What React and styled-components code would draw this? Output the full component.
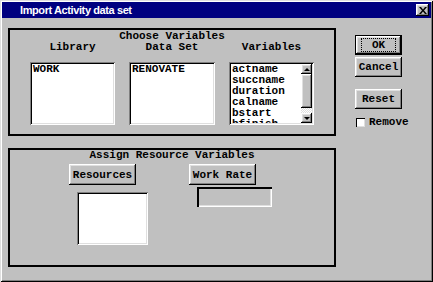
import React from "react"
import styled, { createGlobalStyle, css } from "styled-components"

const GlobalStyle = createGlobalStyle`
  body {
    margin: 0;
    background: #c0c0c0;
  }
`

const mono = `"Liberation Mono", "DejaVu Sans Mono", monospace`

const raised = css`
  box-shadow: inset -1px -1px #000, inset 1px 1px #fff, inset -2px -2px #808080,
    inset 2px 2px #dfdfdf;
`

const sunken = css`
  box-shadow: inset 1px 1px #808080, inset -1px -1px #fff, inset 2px 2px #000,
    inset -2px -2px #dfdfdf;
`

const Window = styled.div`
  width: 433px;
  height: 282px;
  box-sizing: border-box;
  padding: 2px;
  background: #c0c0c0;
  box-shadow: inset 1px 1px #dfdfdf, inset -1px -1px #000, inset 2px 2px #fff,
    inset -2px -2px #808080;
  display: flex;
  flex-direction: column;
  font-family: ${mono};
  font-weight: bold;
  font-size: 11px;
  color: #000;
`

const TitleBar = styled.div`
  height: 16px;
  background: #000080;
  color: #fff;
  display: flex;
  align-items: center;
  justify-content: space-between;
  padding: 0 2px 0 18px;
  font-family: "Liberation Sans", Arial, sans-serif;
  font-weight: bold;
  font-size: 11px;
  letter-spacing: -0.4px;
`

const CloseButton = styled.div`
  width: 13px;
  height: 12px;
  background: #c0c0c0;
  ${raised};
  display: flex;
  align-items: center;
  justify-content: center;
`

const Body = styled.div`
  display: flex;
  gap: 19px;
  padding: 10px 0 0 6px;
`

const LeftCol = styled.div`
  width: 328px;
  display: flex;
  flex-direction: column;
  gap: 12px;
`

const Group = styled.div`
  box-sizing: border-box;
  height: ${(p) => p.$h}px;
  border: 2px solid #000;
  padding-top: ${(p) => p.$pt || 0}px;
`

const GroupTitle = styled.div`
  text-align: center;
  line-height: 10px;
  height: 10px;
`

const VarGrid = styled.div`
  display: grid;
  grid-template-columns: 85px 86px 85px;
  column-gap: 14px;
  padding: 1px 0 0 20px;
`

const ColHead = styled.div`
  text-align: center;
  line-height: 10px;
  height: 10px;
  margin-bottom: 10px;
`

const ListBox = styled.div`
  box-sizing: border-box;
  width: ${(p) => p.$w}px;
  height: ${(p) => p.$h}px;
  padding: 2px;
  background: #fff;
  ${sunken};
  display: flex;
  overflow: hidden;
`

const Items = styled.div`
  flex: 1;
  padding-left: 1px;
  line-height: 11px;
  overflow: hidden;
`

const ScrollBar = styled.div`
  width: 11px;
  display: flex;
  flex-direction: column;
`

const ArrowButton = styled.div`
  height: 10px;
  background: #c0c0c0;
  ${raised};
  display: flex;
  align-items: center;
  justify-content: center;
`

const Thumb = styled.div`
  height: 34px;
  background: #c0c0c0;
  ${raised};
`

const Track = styled.div`
  flex: 1;
  background: repeating-conic-gradient(#fff 0 25%, #dfdfdf 0 50%) 0 0 / 2px 2px;
`

const Triangle = styled.div`
  width: 0;
  height: 0;
  border-left: 3px solid transparent;
  border-right: 3px solid transparent;
  ${(p) =>
    p.$down ? "border-top: 3px solid #000;" : "border-bottom: 3px solid #000;"}
`

const AssignGrid = styled.div`
  display: grid;
  grid-template-columns: 120px 120px;
  padding: 4px 0 0 59px;
`

const AssignCol = styled.div`
  display: flex;
  flex-direction: column;
  align-items: flex-start;
`

const Button = styled.button`
  box-sizing: border-box;
  width: ${(p) => p.$w}px;
  height: ${(p) => p.$h || 20}px;
  margin-top: ${(p) => p.$mt || 0}px;
  padding: 0;
  border: none;
  background: #c0c0c0;
  font: inherit;
  color: #000;
  ${raised};
  ${(p) =>
    p.$default &&
    css`
      border: 1px solid #000;
    `}
  display: flex;
  align-items: center;
  justify-content: center;
`

const Focus = styled.span`
  outline: 1px dotted #000;
  outline-offset: 0;
  padding: 0 10px;
  line-height: 12px;
`

const ResourceBox = styled(ListBox)`
  margin: 7px 0 0 8px;
`

const Field = styled.div`
  box-sizing: border-box;
  width: 75px;
  height: 20px;
  margin: 2px 0 0 8px;
  background: #c0c0c0;
  box-shadow: inset 2px 2px #000, inset -1px -1px #fff, inset -2px -2px #dfdfdf;
`

const ButtonCol = styled.div`
  display: flex;
  flex-direction: column;
  padding-top: 7px;
`

const CheckRow = styled.label`
  display: flex;
  align-items: center;
  gap: 4px;
  margin: 8px 0 0 1px;
  line-height: 10px;
`

const CheckBox = styled.span`
  box-sizing: border-box;
  width: 9px;
  height: 9px;
  background: #fff;
  box-shadow: inset 1px 1px #000, inset -1px -1px #dfdfdf;
`

const variables = ["actname", "succname", "duration", "calname", "bstart", "bfinish"]

const App = () => (
  <>
    <GlobalStyle />
    <Window>
      <TitleBar>
        <span>Import Activity data set</span>
        <CloseButton>
          <svg width="8" height="7" viewBox="0 0 8 7">
            <path d="M0 0h2l2 2.5L6 0h2L5 3.5 8 7H6L4 4.5 2 7H0l3-3.5z" fill="#000" />
          </svg>
        </CloseButton>
      </TitleBar>
      <Body>
        <LeftCol>
          <Group $h={108} $pt={1}>
            <GroupTitle>Choose Variables</GroupTitle>
            <VarGrid>
              <div>
                <ColHead>Library</ColHead>
                <ListBox $w={85} $h={63}>
                  <Items>WORK</Items>
                </ListBox>
              </div>
              <div>
                <ColHead>Data Set</ColHead>
                <ListBox $w={86} $h={63}>
                  <Items>RENOVATE</Items>
                </ListBox>
              </div>
              <div>
                <ColHead>Variables</ColHead>
                <ListBox $w={85} $h={63}>
                  <Items>
                    {variables.map((v) => (
                      <div key={v}>{v}</div>
                    ))}
                  </Items>
                  <ScrollBar>
                    <ArrowButton>
                      <Triangle />
                    </ArrowButton>
                    <Thumb />
                    <Track />
                    <ArrowButton>
                      <Triangle $down />
                    </ArrowButton>
                  </ScrollBar>
                </ListBox>
              </div>
            </VarGrid>
          </Group>
          <Group $h={119}>
            <GroupTitle>Assign Resource Variables</GroupTitle>
            <AssignGrid>
              <AssignCol>
                <Button $w={67} $h={21}>Resources</Button>
                <ResourceBox $w={71} $h={53} />
              </AssignCol>
              <AssignCol>
                <Button $w={67} $h={21}>Work Rate</Button>
                <Field />
              </AssignCol>
            </AssignGrid>
          </Group>
        </LeftCol>
        <ButtonCol>
          <Button $w={47} $default>
            <Focus>OK</Focus>
          </Button>
          <Button $w={47} $mt={2}>Cancel</Button>
          <Button $w={47} $mt={12}>Reset</Button>
          <CheckRow>
            <CheckBox />
            Remove
          </CheckRow>
        </ButtonCol>
      </Body>
    </Window>
  </>
)

export default App
